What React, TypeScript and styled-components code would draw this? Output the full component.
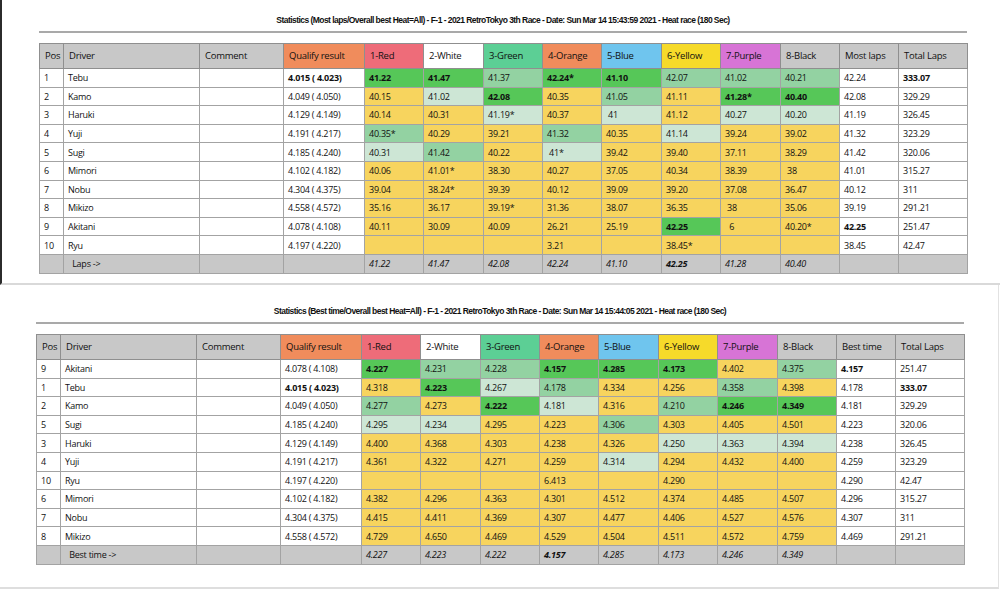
import React from "react";
import styled, { createGlobalStyle } from "styled-components";

const GlobalStyle = createGlobalStyle`
  html, body { margin: 0; padding: 0; background: #ffffff; }
  body { font-family: "Open Sans", "Noto Sans", sans-serif; color: #111; }
`;

type Tone = "Y" | "G" | "M" | "L";

const toneColor: Record<Tone, string> = {
  Y: "#f7d45e",
  G: "#56c758",
  M: "#93d2a2",
  L: "#cde6d5",
};

const GRAY = "#c8c8c8";

const Viewport = styled.div`
  width: 1000px;
  height: 589px;
  overflow: hidden;
  display: flex;
  flex-direction: column;
  background: #fff;
`;

const TopSheet = styled.section`
  box-sizing: border-box;
  height: 285px;
  border-left: 2px solid #2b2b2b;
  border-bottom: 2px solid #d9d9d9;
  padding: 15px 0 0 37px;
`;

const BottomSheet = styled.section`
  box-sizing: border-box;
  flex: 1;
  width: 999px;
  border-right: 1px solid #e2e2e2;
  border-bottom: 2px solid #dedede;
  padding: 21px 0 0 36px;
`;

const Title = styled.div`
  width: 928px;
  text-align: center;
  font-family: "Liberation Sans", Arial, sans-serif;
  font-weight: 700;
  font-size: 8.5px;
  letter-spacing: -0.55px;
  line-height: 10px;
  white-space: nowrap;
  color: #111;
`;

const Rule = styled.div`
  width: 928px;
  height: 2px;
  background: #a9a9a9;
  margin: 6px 0 10px;
`;

const Table = styled.table`
  table-layout: fixed;
  border-collapse: collapse;
  width: 928px;
  border: 1px solid #8a8a8a;
  font-size: 9px;
  letter-spacing: -0.25px;
`;

const HeadRow = styled.tr`
  height: 25px;
`;

const BodyRow = styled.tr`
  height: 18.6px;
`;

const HeadCell = styled.th<{ $bg: string }>`
  background: ${(p) => p.$bg};
  border: 1px solid #8f8f8f;
  text-align: left;
  font-weight: 400;
  font-size: 9.5px;
  padding: 0 3px 0 5px;
  line-height: 12px;
  white-space: nowrap;
  overflow: hidden;
`;

const Cell = styled.td<{ $bg?: string; $bold?: boolean; $italic?: boolean }>`
  background: ${(p) => p.$bg ?? "#ffffff"};
  border: 1px solid #a3a3a3;
  padding: 0 3px 0 4px;
  line-height: 11px;
  white-space: nowrap;
  overflow: hidden;
  font-weight: ${(p) => (p.$bold ? 700 : 400)};
  font-style: ${(p) => (p.$italic ? "italic" : "normal")};
`;

const widths = [24, 136, 84, 81, 59, 60, 59, 59, 60, 59, 60, 59, 59, 69];

const carHeads: { label: string; bg: string }[] = [
  { label: "1-Red", bg: "#ee6c79" },
  { label: "2-White", bg: "#ffffff" },
  { label: "3-Green", bg: "#5ccf95" },
  { label: "4-Orange", bg: "#f08c5c" },
  { label: "5-Blue", bg: "#6fc5ee" },
  { label: "6-Yellow", bg: "#f6da2a" },
  { label: "7-Purple", bg: "#d774d6" },
  { label: "8-Black", bg: GRAY },
];

type Row = {
  pos: string;
  driver: string;
  q: string;
  qb?: boolean;
  cells: string[];
  best: string;
  bb?: boolean;
  total: string;
  tb?: boolean;
};

type Stat = {
  title: string;
  bestHead: string;
  footLabel: string;
  rows: Row[];
  foot: string[];
  footBold: number;
};

const stats1: Stat = {
  title:
    "Statistics (Most laps/Overall best Heat=All) - F-1 - 2021 RetroTokyo 3th Race - Date: Sun Mar 14 15:43:59 2021 - Heat race (180 Sec)",
  bestHead: "Most laps",
  footLabel: "Laps ->",
  footBold: 5,
  foot: ["41.22", "41.47", "42.08", "42.24", "41.10", "42.25", "41.28", "40.40"],
  rows: [
    { pos: "1", driver: "Tebu", q: "4.015 ( 4.023)", qb: true, cells: ["41.22|G", "41.47|G", "41.37|M", "42.24*|G", "41.10|G", "42.07|M", "41.02|M", "40.21|M"], best: "42.24", total: "333.07", tb: true },
    { pos: "2", driver: "Kamo", q: "4.049 ( 4.050)", cells: ["40.15|Y", "41.02|L", "42.08|G", "40.35|Y", "41.05|M", "41.11|Y", "41.28*|G", "40.40|G"], best: "42.08", total: "329.29" },
    { pos: "3", driver: "Haruki", q: "4.129 ( 4.149)", cells: ["40.14|Y", "40.31|Y", "41.19*|L", "40.37|Y", " 41|L", "41.12|Y", "40.27|L", "40.20|L"], best: "41.19", total: "326.45" },
    { pos: "4", driver: "Yuji", q: "4.191 ( 4.217)", cells: ["40.35*|M", "40.29|Y", "39.21|Y", "41.32|M", "40.35|Y", "41.14|L", "39.24|Y", "39.02|Y"], best: "41.32", total: "323.29" },
    { pos: "5", driver: "Sugi", q: "4.185 ( 4.240)", cells: ["40.31|L", "41.42|M", "40.22|Y", " 41*|L", "39.42|Y", "39.40|Y", "37.11|Y", "38.29|Y"], best: "41.42", total: "320.06" },
    { pos: "6", driver: "Mimori", q: "4.102 ( 4.182)", cells: ["40.06|Y", "41.01*|Y", "38.30|Y", "40.27|Y", "37.05|Y", "40.34|Y", "38.39|Y", " 38|Y"], best: "41.01", total: "315.27" },
    { pos: "7", driver: "Nobu", q: "4.304 ( 4.375)", cells: ["39.04|Y", "38.24*|Y", "39.39|Y", "40.12|Y", "39.09|Y", "39.20|Y", "37.08|Y", "36.47|Y"], best: "40.12", total: "311" },
    { pos: "8", driver: "Mikizo", q: "4.558 ( 4.572)", cells: ["35.16|Y", "36.17|Y", "39.19*|Y", "31.36|Y", "38.07|Y", "36.35|Y", " 38|Y", "35.06|Y"], best: "39.19", total: "291.21" },
    { pos: "9", driver: "Akitani", q: "4.078 ( 4.108)", cells: ["40.11|Y", "30.09|Y", "40.09|Y", "26.21|Y", "25.19|Y", "42.25|G", "  6|Y", "40.20*|Y"], best: "42.25", bb: true, total: "251.47" },
    { pos: "10", driver: "Ryu", q: "4.197 ( 4.220)", cells: ["|Y", "|Y", "|Y", "3.21|Y", "|Y", "38.45*|Y", "|Y", "|Y"], best: "38.45", total: "42.47" },
  ],
};

const stats2: Stat = {
  title:
    "Statistics (Best time/Overall best Heat=All) - F-1 - 2021 RetroTokyo 3th Race - Date: Sun Mar 14 15:44:05 2021 - Heat race (180 Sec)",
  bestHead: "Best time",
  footLabel: "Best time ->",
  footBold: 3,
  foot: ["4.227", "4.223", "4.222", "4.157", "4.285", "4.173", "4.246", "4.349"],
  rows: [
    { pos: "9", driver: "Akitani", q: "4.078 ( 4.108)", cells: ["4.227|G", "4.231|M", "4.228|M", "4.157|G", "4.285|G", "4.173|G", "4.402|Y", "4.375|M"], best: "4.157", bb: true, total: "251.47" },
    { pos: "1", driver: "Tebu", q: "4.015 ( 4.023)", qb: true, cells: ["4.318|Y", "4.223|G", "4.267|L", "4.178|M", "4.334|Y", "4.256|Y", "4.358|M", "4.398|Y"], best: "4.178", total: "333.07", tb: true },
    { pos: "2", driver: "Kamo", q: "4.049 ( 4.050)", cells: ["4.277|M", "4.273|Y", "4.222|G", "4.181|L", "4.316|Y", "4.210|M", "4.246|G", "4.349|G"], best: "4.181", total: "329.29" },
    { pos: "5", driver: "Sugi", q: "4.185 ( 4.240)", cells: ["4.295|L", "4.234|L", "4.295|Y", "4.223|Y", "4.306|M", "4.303|Y", "4.405|Y", "4.501|Y"], best: "4.223", total: "320.06" },
    { pos: "3", driver: "Haruki", q: "4.129 ( 4.149)", cells: ["4.400|Y", "4.368|Y", "4.303|Y", "4.238|Y", "4.326|Y", "4.250|L", "4.363|L", "4.394|L"], best: "4.238", total: "326.45" },
    { pos: "4", driver: "Yuji", q: "4.191 ( 4.217)", cells: ["4.361|Y", "4.322|Y", "4.271|Y", "4.259|Y", "4.314|L", "4.294|Y", "4.432|Y", "4.400|Y"], best: "4.259", total: "323.29" },
    { pos: "10", driver: "Ryu", q: "4.197 ( 4.220)", cells: ["|Y", "|Y", "|Y", "6.413|Y", "|Y", "4.290|Y", "|Y", "|Y"], best: "4.290", total: "42.47" },
    { pos: "6", driver: "Mimori", q: "4.102 ( 4.182)", cells: ["4.382|Y", "4.296|Y", "4.363|Y", "4.301|Y", "4.512|Y", "4.374|Y", "4.485|Y", "4.507|Y"], best: "4.296", total: "315.27" },
    { pos: "7", driver: "Nobu", q: "4.304 ( 4.375)", cells: ["4.415|Y", "4.411|Y", "4.369|Y", "4.307|Y", "4.477|Y", "4.406|Y", "4.527|Y", "4.576|Y"], best: "4.307", total: "311" },
    { pos: "8", driver: "Mikizo", q: "4.558 ( 4.572)", cells: ["4.729|Y", "4.650|Y", "4.469|Y", "4.529|Y", "4.504|Y", "4.511|Y", "4.572|Y", "4.759|Y"], best: "4.469", total: "291.21" },
  ],
};

const PreText = styled.span`
  white-space: pre;
`;

function StatTable({ stat }: { stat: Stat }) {
  return (
    <>
      <Title>{stat.title}</Title>
      <Rule />
      <Table>
        <colgroup>
          {widths.map((w, i) => (
            <col key={i} style={{ width: w }} />
          ))}
        </colgroup>
        <thead>
          <HeadRow>
            <HeadCell $bg={GRAY}>Pos</HeadCell>
            <HeadCell $bg={GRAY}>Driver</HeadCell>
            <HeadCell $bg={GRAY}>Comment</HeadCell>
            <HeadCell $bg="#f08c5c">Qualify result</HeadCell>
            {carHeads.map((h) => (
              <HeadCell key={h.label} $bg={h.bg}>
                {h.label}
              </HeadCell>
            ))}
            <HeadCell $bg={GRAY}>{stat.bestHead}</HeadCell>
            <HeadCell $bg={GRAY}>Total Laps</HeadCell>
          </HeadRow>
        </thead>
        <tbody>
          {stat.rows.map((r) => (
            <BodyRow key={r.driver}>
              <Cell>{r.pos}</Cell>
              <Cell>{r.driver}</Cell>
              <Cell />
              <Cell $bold={r.qb}>{r.q}</Cell>
              {r.cells.map((c, i) => {
                const [v, t] = c.split("|") as [string, Tone];
                return (
                  <Cell key={i} $bg={toneColor[t]} $bold={t === "G"}>
                    <PreText>{v}</PreText>
                  </Cell>
                );
              })}
              <Cell $bold={r.bb}>{r.best}</Cell>
              <Cell $bold={r.tb}>{r.total}</Cell>
            </BodyRow>
          ))}
          <BodyRow>
            <Cell $bg={GRAY} />
            <Cell $bg={GRAY}>
              <PreText>{"  " + stat.footLabel}</PreText>
            </Cell>
            <Cell $bg={GRAY} />
            <Cell $bg={GRAY} />
            {stat.foot.map((f, i) => (
              <Cell key={i} $bg={GRAY} $italic $bold={i === stat.footBold}>
                {f}
              </Cell>
            ))}
            <Cell $bg={GRAY} />
            <Cell $bg={GRAY} />
          </BodyRow>
        </tbody>
      </Table>
    </>
  );
}

export default function App() {
  return (
    <>
      <GlobalStyle />
      <Viewport>
        <TopSheet>
          <StatTable stat={stats1} />
        </TopSheet>
        <BottomSheet>
          <StatTable stat={stats2} />
        </BottomSheet>
      </Viewport>
    </>
  );
}
